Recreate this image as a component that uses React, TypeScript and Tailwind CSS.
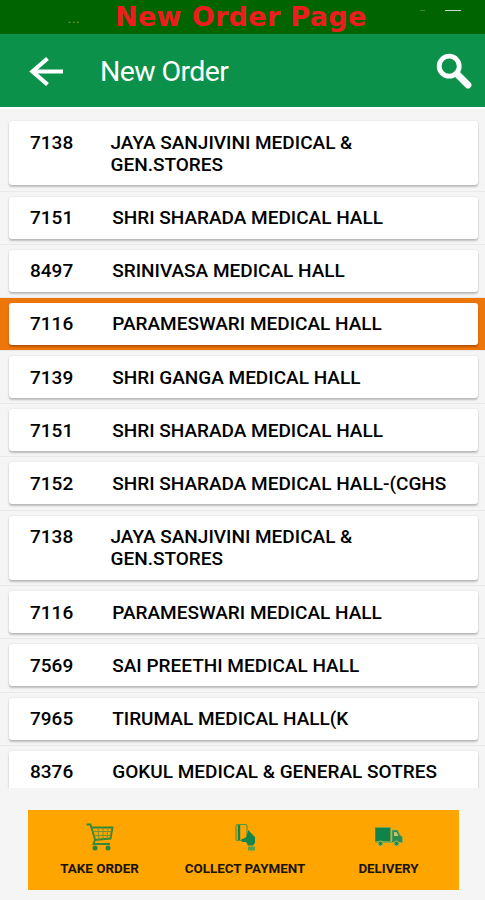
import React from 'react';

interface Customer {
  code: string;
  name: string;
  selected?: boolean;
  wrap?: boolean;
}

const customers: Customer[] = [
  { code: '7138', name: 'JAYA SANJIVINI MEDICAL & GEN.STORES', wrap: true },
  { code: '7151', name: 'SHRI SHARADA MEDICAL HALL' },
  { code: '8497', name: 'SRINIVASA MEDICAL HALL' },
  { code: '7116', name: 'PARAMESWARI MEDICAL HALL', selected: true },
  { code: '7139', name: 'SHRI GANGA MEDICAL HALL' },
  { code: '7151', name: 'SHRI SHARADA MEDICAL HALL' },
  { code: '7152', name: 'SHRI SHARADA MEDICAL HALL-(CGHS' },
  { code: '7138', name: 'JAYA SANJIVINI MEDICAL & GEN.STORES', wrap: true },
  { code: '7116', name: 'PARAMESWARI MEDICAL HALL' },
  { code: '7569', name: 'SAI PREETHI MEDICAL HALL' },
  { code: '7965', name: 'TIRUMAL MEDICAL HALL(K' },
  { code: '8376', name: 'GOKUL MEDICAL & GENERAL SOTRES' },
];

const BackIcon = () => (
  <svg width="36" height="30" viewBox="0 0 36 30" fill="none" stroke="white" strokeWidth="4.2">
    <path d="M34 15.500H4M18.500 2.500L3.500 15.500L18.500 28.500" />
  </svg>
);

const SearchIcon = () => (
  <svg width="36" height="36" viewBox="0 0 36 36" fill="none" stroke="white">
    <circle cx="13.200" cy="13.200" r="10" strokeWidth="4.800" />
    <path d="M21 21L32 32" strokeWidth="6.800" strokeLinecap="round" />
  </svg>
);

const CartIcon = () => (
  <svg width="28" height="28" viewBox="0 0 28 28" fill="none" stroke="#35883a" strokeWidth="1.900">
    <path d="M.5 1.500H4.500L9 16.500L7.500 21H24" />
    <path d="M5.500 4.500H26.500L24.500 15.500L8.500 17" />
    <path d="M6.500 8.500H25.500M7.500 12.500H25M12 5L13 17M17 5V16.500M22 5L21 16" strokeWidth="1" stroke="#739333" />
    <circle cx="9" cy="25" r="2.500" fill="#2b8740" stroke="none" />
    <circle cx="22" cy="25" r="2.500" fill="#2b8740" stroke="none" />
  </svg>
);

const PaymentIcon = () => (
  <svg width="24" height="28" viewBox="0 0 24 28" fill="none">
    <rect x="3" y="1.500" width="11" height="16" rx="1.500" stroke="#5b9440" strokeWidth="1.200" />
    <path d="M4.800 2H7.200V17H4.800Z" fill="#16854c" />
    <path d="M8 16.500L13 14.500L15.500 7L17 9L22 14V20L20 22.500H15L13 19L9 19Z" fill="#16854c" />
    <path d="M15 23.500H22V27.500H15Z" fill="#59a04c" />
  </svg>
);

const TruckIcon = () => (
  <svg width="28" height="20" viewBox="0 0 28 20">
    <path d="M0 .5H15.500V15H0Z" fill="#108448" stroke="#75a255" strokeWidth=".8" />
    <path d="M17 3H22.500L25 8L27.500 10V15.500H0V14.500H17Z" fill="#2d8c4c" stroke="#8faf5a" strokeWidth=".7" />
    <path d="M19 5H21.500L23.500 9H19Z" fill="#bcc679" />
    <circle cx="5.500" cy="16.500" r="2.500" fill="#218c4a" stroke="#b8b85a" strokeWidth=".9" />
    <circle cx="21.500" cy="16.500" r="2.500" fill="#218c4a" stroke="#b8b85a" strokeWidth=".9" />
  </svg>
);

const CustomerRow: React.FC<{ customer: Customer }> = ({ customer }) => (
  <li
    className={`shrink-0 border-b border-[#e9e9e9] pt-[5px] pr-[7px] pl-[9px] ${
      customer.wrap ? 'h-[75.500px]' : 'h-[53.200px]'
    } ${customer.selected ? 'bg-[#ed760b]' : ''}`}
  >
    <div
      className={`flex rounded-[3px] bg-white pl-[21px] text-[19px] leading-[22px] font-medium text-black ${
        customer.wrap ? 'h-[64px] pt-[10.500px]' : 'h-[42px] pt-[10.500px]'
      } ${
        customer.selected
          ? 'shadow-[0_2px_2px_#b95300]'
          : 'shadow-[0_2px_2px_rgba(0,0,0,0.22),0_0_2px_rgba(0,0,0,0.12)]'
      }`}
    >
      <span className={customer.wrap ? 'w-[80.500px] shrink-0' : 'w-[82.200px] shrink-0'}>{customer.code}</span>
      <span className={customer.wrap ? 'w-[260px]' : 'whitespace-nowrap'}>{customer.name}</span>
    </div>
  </li>
);

const App: React.FC = () => {
  return (
    <div className="flex h-[900px] w-[485px] flex-col overflow-hidden bg-[#f5f5f5] font-['Roboto',sans-serif]">
      <div className="flex h-[34px] shrink-0 bg-[#006400]">
        <span className="w-[115px] shrink-0 pt-[12px] pl-[68px] text-[12px] leading-[14px] tracking-[1px] text-[#79a979]">...</span>
        <h1 className="w-[255px] shrink-0 font-['DejaVu_Sans',sans-serif] text-[27px] leading-[34px] font-bold tracking-[0.350px] whitespace-nowrap text-[#ee1c1c]">
          New Order Page
        </h1>
        <span className="mt-[10px] ml-[50px] h-px w-[5px] bg-[#3f853f]" />
        <span className="mt-[10px] ml-[20px] h-px w-[16px] bg-[#c5dac5]" />
      </div>

      <header className="flex h-[73px] shrink-0 items-center bg-[#0b9149] pl-[29px] text-white">
        <BackIcon />
        <h2 className="mt-[2px] ml-[35px] w-[336px] text-[28.500px] leading-[36px] tracking-[-0.600px]">New Order</h2>
        <SearchIcon />
      </header>

      <ul className="flex h-[681px] shrink-0 flex-col overflow-hidden border-t-2 border-white pt-[7px]">
        {customers.map((customer, index) => (
          <CustomerRow key={index} customer={customer} />
        ))}
      </ul>

      <footer className="mt-[22.400px] ml-[27.500px] flex h-[80px] w-[431px] shrink-0 bg-[#ffa500] text-[13.400px] leading-[16px] font-bold text-[#181408]">
        <button className="flex w-[144px] flex-col items-center pt-[12px]">
          <span className="flex h-[30px] items-center"><CartIcon /></span>
          <span className="mt-[8.500px]">TAKE ORDER</span>
        </button>
        <button className="flex w-[147px] flex-col items-center pt-[12px]">
          <span className="flex h-[30px] items-center"><PaymentIcon /></span>
          <span className="mt-[8.500px]">COLLECT PAYMENT</span>
        </button>
        <button className="flex w-[140px] flex-col items-center pt-[12px]">
          <span className="flex h-[30px] items-center"><TruckIcon /></span>
          <span className="mt-[8.500px]">DELIVERY</span>
        </button>
      </footer>
    </div>
  );
};

export default App;
